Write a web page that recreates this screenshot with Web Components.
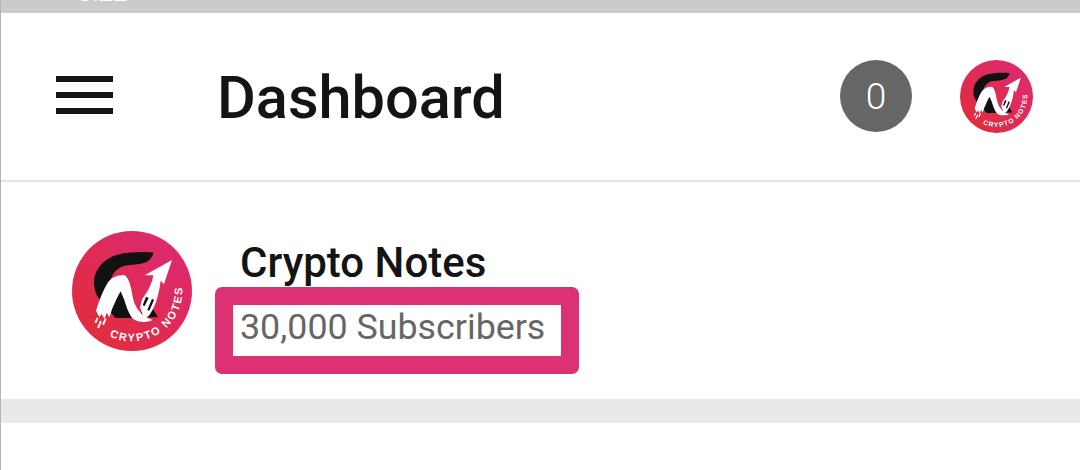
<!DOCTYPE html>
<html>
<head>
<meta charset="utf-8">
<title>Dashboard</title>
<style>
  html, body { margin: 0; padding: 0; background: #fff; }
  body { font-family: Roboto, "Liberation Sans", sans-serif; }
</style>
</head>
<body>
<dash-page>
  <status-strip slot="status">3:22</status-strip>
  <app-header slot="header" count="0">Dashboard</app-header>
  <channel-card slot="channel" name="Crypto Notes">30,000 Subscribers</channel-card>
</dash-page>

<script>
class CryptoLogo extends HTMLElement {
  connectedCallback() {
    const size = this.getAttribute('size') || 120;
    const id = 'arc' + size;
    this.attachShadow({ mode: 'open' });
    this.shadowRoot.innerHTML = `
      <style>
        :host { display: block; width: ${size}px; height: ${size}px; flex: none; }
        svg { display: block; width: 100%; height: 100%; }
        text { font-family: "Liberation Sans", sans-serif; font-weight: 700; font-size: 33px; fill: #fff; }
      </style>
      <svg viewBox="36 33 360 360">
        <defs>
          <linearGradient id="g${id}" x1="0.85" y1="0.1" x2="0.2" y2="0.8">
            <stop offset="0" stop-color="#dc2a70"/>
            <stop offset="1" stop-color="#e12c42"/>
          </linearGradient>
          <path id="${id}" d="M148 348 A151 151 0 0 0 366 195"/>
        </defs>
        <circle cx="216" cy="213" r="180" fill="url(#g${id})"/>
        <path fill="#111" d="M281 98 C250 95 205 95 170 105 C130 117 102 150 102 188 C102 215 115 238 132 252 L166 294 L224 294 L184 200 L150 190 C152 165 170 142 195 137 C225 133 252 134 268 120 C274 114 278 106 281 98 Z"/>
        <path fill="#111" d="M232 292 L268 250 L294 292 Z"/>
        <path fill="#fff" d="M108 272 C118 240 128 215 142 190 C152 174 170 165 192 165 C205 170 212 195 217 225 C223 260 240 288 278 300 C262 308 240 308 224 300 C208 290 200 262 192 238 L182 214 C172 230 164 250 156 268 L148 292 L140 278 L134 296 L124 282 L118 292 Z"/>
        <path fill="#fff" d="M336 120 L254 166 L280 166 C276 190 266 212 246 238 L240 262 L252 296 L266 288 C282 268 296 232 302 182 L312 192 Z"/>
        <path fill="#111" d="M258 230 L248 256 L254 258 L266 234 Z M276 236 L262 270 L268 272 L282 240 Z"/>
        <path fill="none" stroke="#fff" stroke-width="6" stroke-linecap="round" d="M112 296 L107 306 M122 305 L115 322 M136 298 L130 312"/>
        <text><textPath href="#${id}" textLength="318" lengthAdjust="spacing">CRYPTO NOTES</textPath></text>
      </svg>
    `;
  }
}
customElements.define('crypto-logo', CryptoLogo);

class StatusStrip extends HTMLElement {
  connectedCallback() {
    this.attachShadow({ mode: 'open' });
    this.shadowRoot.innerHTML = `
      <style>
        :host { display: block; height: 13px; background: #cbcbcb; overflow: hidden; }
        span {
          display: block;
          margin: -22px 0 0 77px;
          font: 500 25px/30px Roboto, sans-serif;
          color: #fff;
        }
      </style>
      <span><slot></slot></span>
    `;
  }
}
customElements.define('status-strip', StatusStrip);

class MenuIcon extends HTMLElement {
  connectedCallback() {
    this.attachShadow({ mode: 'open' });
    this.shadowRoot.innerHTML = `
      <style>
        :host { display: flex; flex-direction: column; gap: 10px; width: 57px; flex: none; margin-bottom: 2px; }
        i { display: block; height: 6px; background: #141414; }
      </style>
      <i></i><i></i><i></i>
    `;
  }
}
customElements.define('menu-icon', MenuIcon);

class AppHeader extends HTMLElement {
  connectedCallback() {
    const count = this.getAttribute('count') || '0';
    this.attachShadow({ mode: 'open' });
    this.shadowRoot.innerHTML = `
      <style>
        :host {
          display: flex;
          align-items: center;
          box-sizing: border-box;
          height: 169px;
          padding: 0 47px 1px 55px;
          border-bottom: 2px solid #e4e4e4;
        }
        h1 {
          flex: 1;
          margin: 4px 0 0 104px;
          font: 500 59.5px/70px Roboto, sans-serif;
          color: #141414;
        }
        .count {
          display: flex;
          align-items: center;
          justify-content: center;
          width: 72px;
          height: 72px;
          margin-right: 48px;
          border-radius: 50%;
          background: #666;
          color: #fff;
          font: 300 37px/1 Roboto, sans-serif;
        }
      </style>
      <menu-icon></menu-icon>
      <h1><slot></slot></h1>
      <div class="count">${count}</div>
      <crypto-logo size="73"></crypto-logo>
    `;
  }
}
customElements.define('app-header', AppHeader);

class ChannelCard extends HTMLElement {
  connectedCallback() {
    const name = this.getAttribute('name') || '';
    this.attachShadow({ mode: 'open' });
    this.shadowRoot.innerHTML = `
      <style>
        :host {
          display: flex;
          align-items: flex-start;
          box-sizing: border-box;
          height: 217px;
          padding: 49px 0 0 71px;
        }
        .info { display: flex; flex-direction: column; align-items: flex-start; margin: 8px 0 0 23px; }
        .name {
          margin-left: 25px;
          font: 500 42px/47px Roboto, sans-serif;
          color: #141414;
          height: 48px;
        }
        .subs {
          box-sizing: border-box;
          width: 364px;
          height: 87px;
          padding-left: 7px;
          border: 18px solid #dc3274;
          border-radius: 7px;
          font: 400 35.8px/45px Roboto, sans-serif;
          color: #666;
          white-space: nowrap;
        }
      </style>
      <crypto-logo size="120"></crypto-logo>
      <div class="info">
        <div class="name">${name}</div>
        <div class="subs"><slot></slot></div>
      </div>
    `;
  }
}
customElements.define('channel-card', ChannelCard);

class DashPage extends HTMLElement {
  connectedCallback() {
    this.attachShadow({ mode: 'open' });
    this.shadowRoot.innerHTML = `
      <style>
        :host { display: block; box-sizing: border-box; height: 470px; overflow: hidden; background: #fff; border-left: 1px solid #b4b4b4; }
        .gap { height: 24px; background: #e9e9e9; }
      </style>
      <slot name="status"></slot>
      <slot name="header"></slot>
      <slot name="channel"></slot>
      <div class="gap"></div>
    `;
  }
}
customElements.define('dash-page', DashPage);
</script>
</body>
</html>
